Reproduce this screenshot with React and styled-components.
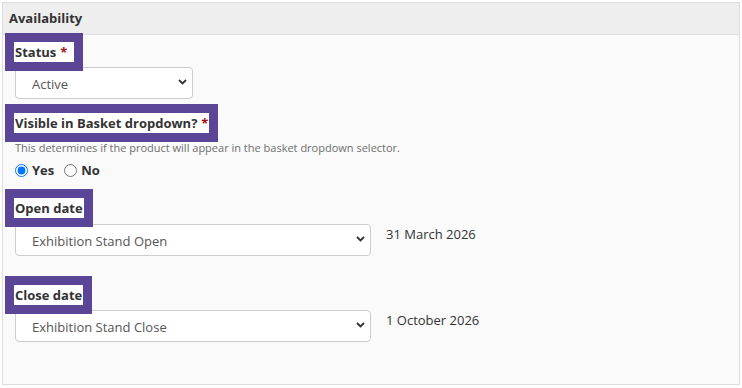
import React from "react";
import styled, { createGlobalStyle } from "styled-components";

const Global = createGlobalStyle`
  html, body { margin: 0; padding: 0; background: #ffffff; }
  body { font-family: "Open Sans", "Noto Sans", "Liberation Sans", sans-serif; color: #333; }
  * { box-sizing: border-box; }
`;

const Page = styled.div`
  padding: 2px 0 0 2px;
  width: 742px;
  height: 388px;
`;

const Panel = styled.section`
  width: 738px;
  height: 383px;
  border: 1px solid #dddddd;
  background: #fafafa;
  display: flex;
  flex-direction: column;
`;

const PanelHeading = styled.header`
  height: 32px;
  background: #eeeeee;
  border-bottom: 1px solid #dddddd;
  padding: 0 6px 1px 6px;
  display: flex;
  align-items: center;
  font-size: 13px;
  font-weight: 700;
  color: #333;
`;

const PanelBody = styled.div`
  padding: 7px 12px 0 12px;
  display: flex;
  flex-direction: column;
`;

const Group = styled.div`
  display: flex;
  flex-direction: column;
  align-items: flex-start;
  margin-bottom: ${(p) => p.$mb || 0}px;
`;

const Label = styled.label`
  display: inline-block;
  font-size: 13px;
  font-weight: 700;
  line-height: 20px;
  color: #333;
  background: #ffffff;
  margin-left: -1px;
  padding: 0 ${(p) => p.$padRight || 1}px 0 1px;
  box-shadow: 0 0 0 9px #5a4596;
  position: relative;
  z-index: 1;
`;

const Required = styled.span`
  color: #a50f0f;
  margin-left: 4px;
`;

const Help = styled.div`
  margin-top: 6px;
  font-size: 11px;
  line-height: 18px;
  color: #6f6f6f;
`;

const RadioRow = styled.div`
  margin-top: 3px;
  height: 20px;
  display: flex;
  align-items: center;
`;

const RadioOption = styled.label`
  display: inline-flex;
  align-items: center;
  font-size: 13px;
  font-weight: 700;
  color: #333;
  margin-right: 10px;
`;

const Radio = styled.input`
  width: 13px;
  height: 13px;
  margin: 0 4px 0 0;
  accent-color: #0075ff;
`;

const ControlRow = styled.div`
  display: flex;
  align-items: flex-start;
  gap: 15px;
  margin-top: ${(p) => p.$mt || 5}px;
`;

const SelectWrap = styled.div`
  position: relative;
  width: ${(p) => p.$w}px;
  height: 32px;
`;

const Select = styled.select`
  appearance: none;
  -webkit-appearance: none;
  width: 100%;
  height: 32px;
  border: 1px solid #cccccc;
  border-radius: 4px;
  background: #ffffff;
  padding: 1px 24px 0 16px;
  font-family: "Open Sans", "Noto Sans", "Liberation Sans", sans-serif;
  font-size: 13px;
  color: #555555;
  outline: none;
`;

const Chevron = styled.svg`
  position: absolute;
  right: 6px;
  top: 12px;
  width: 9px;
  height: 6px;
  pointer-events: none;
`;

const DateText = styled.div`
  font-size: 13px;
  line-height: 20px;
  color: #333;
`;

function Dropdown({ width, value, options }) {
  return (
    <SelectWrap $w={width}>
      <Select defaultValue={value}>
        {options.map((o) => (
          <option key={o}>{o}</option>
        ))}
      </Select>
      <Chevron viewBox="0 0 9 6">
        <path d="M1 1 L4.5 4.5 L8 1" fill="none" stroke="#333" strokeWidth="1.8" />
      </Chevron>
    </SelectWrap>
  );
}

export default function App() {
  return (
    <>
      <Global />
      <Page>
        <Panel>
          <PanelHeading>Availability</PanelHeading>
          <PanelBody>
            <Group $mb={14}>
              <Label $padRight={7}>
                Status<Required>*</Required>
              </Label>
              <ControlRow $mt={5}>
                <Dropdown width={178} value="Active" options={["Active", "Inactive"]} />
              </ControlRow>
            </Group>

            <Group $mb={18}>
              <Label>
                Visible in Basket dropdown?<Required>*</Required>
              </Label>
              <Help>This determines if the product will appear in the basket dropdown selector.</Help>
              <RadioRow>
                <RadioOption>
                  <Radio type="radio" name="visible" defaultChecked />
                  Yes
                </RadioOption>
                <RadioOption>
                  <Radio type="radio" name="visible" />
                  No
                </RadioOption>
              </RadioRow>
            </Group>

            <Group $mb={29}>
              <Label>Open date</Label>
              <ControlRow $mt={6}>
                <Dropdown
                  width={356}
                  value="Exhibition Stand Open"
                  options={["Exhibition Stand Open", "Exhibition Stand Close"]}
                />
                <DateText>31 March 2026</DateText>
              </ControlRow>
            </Group>

            <Group>
              <Label>Close date</Label>
              <ControlRow $mt={5}>
                <Dropdown
                  width={356}
                  value="Exhibition Stand Close"
                  options={["Exhibition Stand Open", "Exhibition Stand Close"]}
                />
                <DateText>1 October 2026</DateText>
              </ControlRow>
            </Group>
          </PanelBody>
        </Panel>
      </Page>
    </>
  );
}
